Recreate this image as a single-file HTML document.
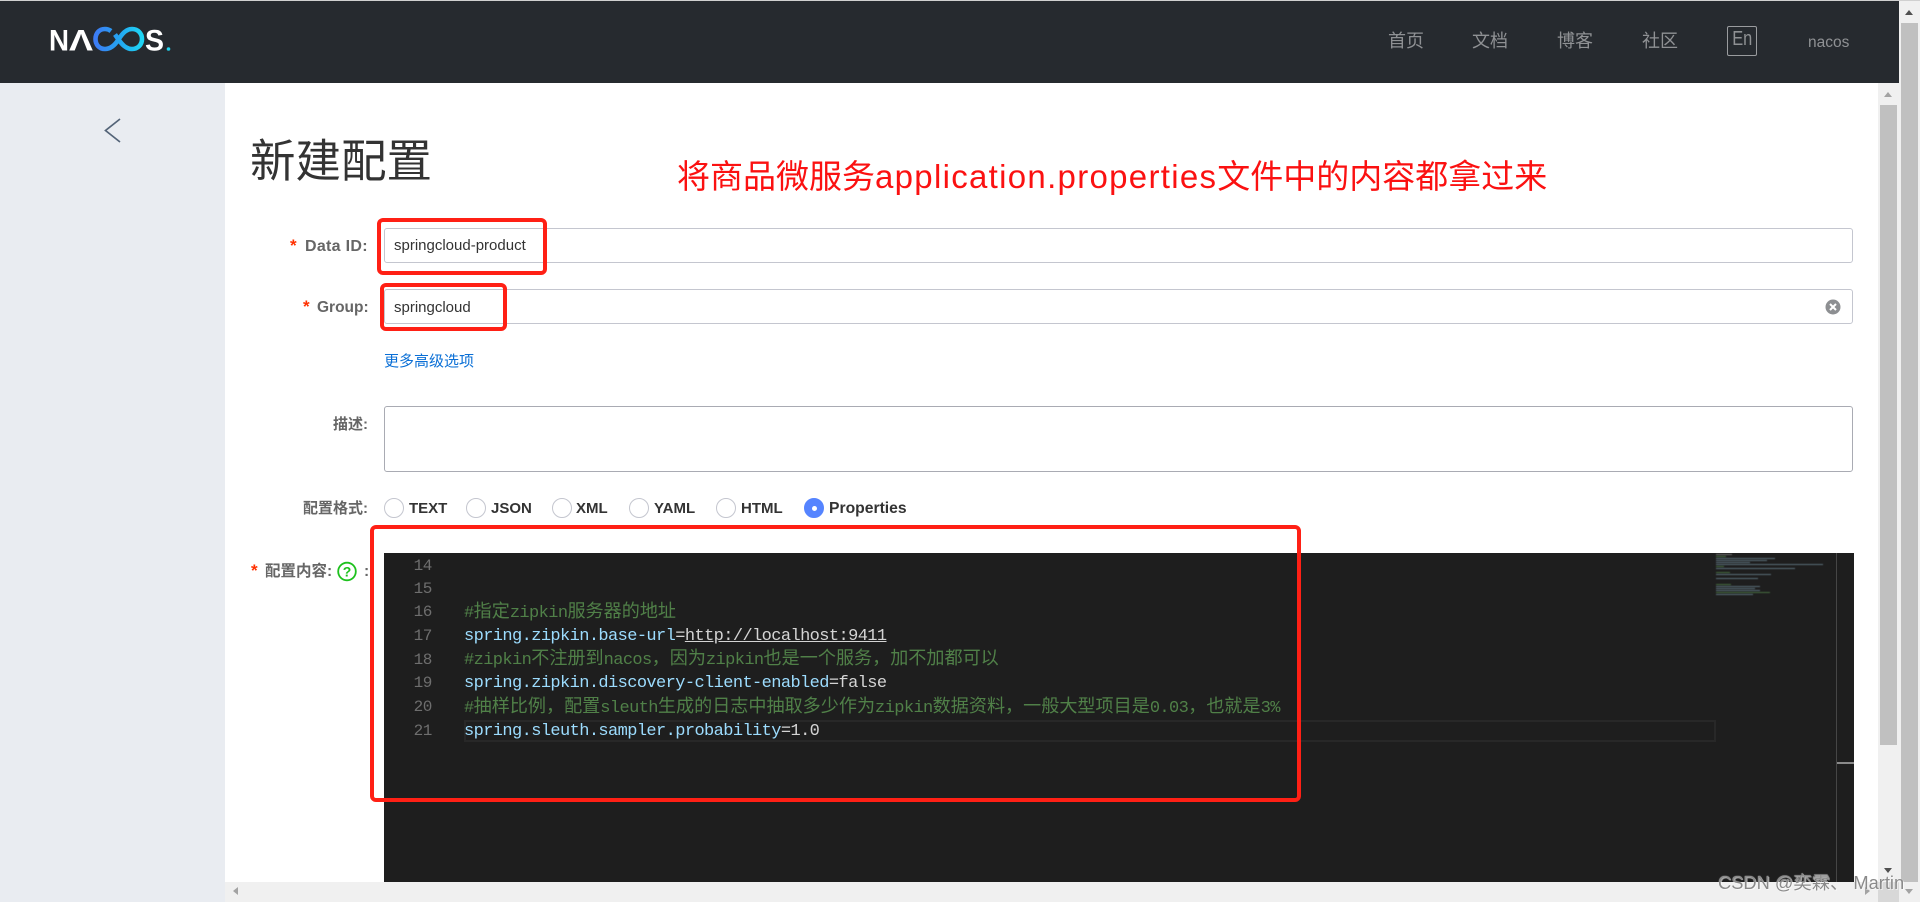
<!DOCTYPE html>
<html lang="zh"><head><meta charset="utf-8"><title>新建配置</title>
<style>
html,body{margin:0;padding:0;width:1920px;height:902px;overflow:hidden;background:#fff}
body{position:relative;font-family:"Liberation Sans","Noto Sans CJK SC",sans-serif}
.a{position:absolute;white-space:nowrap}
.t{position:absolute;white-space:nowrap;line-height:20px;height:20px}
.lb{font-weight:700;font-size:15.500px;color:#666}
.star{color:#ff3000;font-weight:700;font-size:17px}
.inp{position:absolute;box-sizing:border-box;border:1px solid #c4c6cf;border-radius:3px;background:#fff}
.v{font-size:15px;color:#333}
.nav{font-size:18px;color:#8f9194;top:31px}
.r{position:absolute;top:498px;width:20px;height:20px;box-sizing:border-box;border:1px solid #c4c6cf;border-radius:50%;background:#fff}
.rt{top:499px;font-size:15px;font-weight:700;color:#333}
.red{position:absolute;box-sizing:border-box;border:4px solid #ff2015;border-radius:6px}
.ln{position:absolute;left:412px;width:20px;text-align:right;font:16px/24px "Liberation Mono",monospace;letter-spacing:-.4px;color:#6e6e6e;height:24px}
.c{position:absolute;left:464px;white-space:pre;height:24px;font:17px/24px "Liberation Mono","Noto Sans CJK SC",monospace;letter-spacing:-.6px;color:#9cdcfe}
.g{color:#508048}
.g b{font-weight:400;font-size:18.100px;line-height:0;letter-spacing:0;font-family:"Noto Sans CJK SC",sans-serif}
.w{color:#d4d4d4}
.s{position:absolute;width:0;height:0}
.ti{letter-spacing:1.300px}
</style></head><body>
<div class="a" style="left:0;top:0;width:1920px;height:1px;background:#d0d0d0"></div>
<div class="a" style="left:0;top:1px;width:1899px;height:82px;background:#262a2f"></div>

<svg class="a" style="left:40px;top:20px" width="140" height="40" viewBox="0 0 140 40">
<defs><linearGradient id="lg" x1="0" x2="1"><stop offset="0" stop-color="#3d7cf5"/><stop offset=".55" stop-color="#22a8f0"/><stop offset="1" stop-color="#1fd6f5"/></linearGradient></defs>
<text x="9" y="30.500" font-family="Liberation Sans" font-weight="700" font-size="30" fill="#fff" textLength="20" lengthAdjust="spacingAndGlyphs">N</text>
<text x="29" y="30.500" font-family="Liberation Sans" font-weight="700" font-size="30" fill="#fff" textLength="24" lengthAdjust="spacingAndGlyphs">Λ</text>
<path d="M71 11C69 9.500 67 9 65 9C59 9 55.500 13.500 55.500 19C55.500 24.500 59 29 65 29C71 29 75 25 78.500 19.500C82 14 86 9 92 9C98 9 102 13.500 102 19C102 24.500 98 29 92 29C86 29 82 24.500 78.500 19.500L75 14.500" fill="none" stroke="url(#lg)" stroke-width="4.600"/>
<text x="105" y="30.500" font-family="Liberation Sans" font-weight="700" font-size="30" fill="#fff" textLength="19" lengthAdjust="spacingAndGlyphs">S</text>
<circle cx="128.500" cy="29" r="1.800" fill="#22d3ee"/>
</svg>

<div class="t nav" style="left:1388px">首页</div>
<div class="t nav" style="left:1472px">文档</div>
<div class="t nav" style="left:1557px">博客</div>
<div class="t nav" style="left:1642px">社区</div>
<div class="a" style="left:1727px;top:26px;width:30px;height:30px;box-sizing:border-box;border:1px solid #9a9c9f;border-radius:2px;text-align:center;font-size:20px;line-height:25px;color:#8f9194"><span style="display:inline-block;transform:scaleX(.82)">En</span></div>
<div class="t" style="left:1808px;top:33px;font-size:15.500px;color:#8f9194">nacos</div>

<div class="a" style="left:0;top:83px;width:225px;height:819px;background:#e9ecf1"></div>
<svg class="a" style="left:100px;top:115px" width="26" height="32"><path d="M20 4 L5.500 15.500 20 27" fill="none" stroke="#546478" stroke-width="1.700"/></svg>

<div class="a" style="left:250px;top:134px;font-size:45.500px;line-height:56px;color:#333">新建配置</div>
<div class="a" style="left:677px;top:154px;font-size:33px;line-height:46px;color:#fb1111">将商品微服务<span class="ti">application.properties</span>文件中的内容都拿过来</div>

<div class="t star" style="left:290px;top:236px">*</div><div class="t lb" style="left:305px;top:237px;font-size:16px;letter-spacing:.3px">Data ID:</div>
<div class="inp" style="left:384px;top:228px;width:1469px;height:35px"></div>
<div class="t v" style="left:394px;top:236px">springcloud-product</div>

<div class="t star" style="left:303px;top:297px">*</div><div class="t lb" style="left:317px;top:298px">Group:</div>
<div class="inp" style="left:384px;top:289px;width:1469px;height:35px"></div>
<div class="t v" style="left:394px;top:298px">springcloud</div>
<svg class="a" style="left:1825px;top:299px" width="16" height="16"><circle cx="8" cy="8" r="7.500" fill="#8d8f92"/><path d="M5 5L11 11M11 5L5 11" stroke="#fff" stroke-width="2"/></svg>

<div class="t" style="left:384px;top:352px;font-size:15px;color:#0a6fd6">更多高级选项</div>

<div class="t lb" style="left:333px;top:415px;font-size:15px">描述:</div>
<div class="inp" style="left:384px;top:406px;width:1469px;height:66px;border-color:#a9abb3"></div>

<div class="t lb" style="left:303px;top:499px;font-size:15px">配置格式:</div>
<div class="r" style="left:384px"></div><div class="t rt" style="left:409px">TEXT</div>
<div class="r" style="left:466px"></div><div class="t rt" style="left:491px">JSON</div>
<div class="r" style="left:552px"></div><div class="t rt" style="left:576px">XML</div>
<div class="r" style="left:629px"></div><div class="t rt" style="left:654px">YAML</div>
<div class="r" style="left:716px"></div><div class="t rt" style="left:741px">HTML</div>
<div class="r" style="left:804px;background:#5584ff;border-color:#5584ff"></div>
<div class="a" style="left:811.500px;top:505.500px;width:5px;height:5px;border-radius:50%;background:#fff"></div>
<div class="t rt" style="left:829px;font-size:15.700px">Properties</div>

<div class="t star" style="left:251px;top:561px">*</div><div class="t lb" style="left:265px;top:562px;font-size:15.500px">配置内容:</div>
<svg class="a" style="left:337px;top:561px" width="20" height="21"><circle cx="10" cy="10.500" r="8.800" fill="none" stroke="#1dc11d" stroke-width="1.800"/><text x="10" y="15.500" font-family="Liberation Sans" font-size="14" font-weight="700" text-anchor="middle" fill="#1dc11d">?</text></svg>
<div class="t lb" style="left:364px;top:562px">:</div>

<div class="a" style="left:384px;top:553px;width:1470px;height:329px;background:#1e1e1e"></div>
<div class="a" style="left:464px;top:720px;width:1252px;height:22px;box-sizing:border-box;border:2px solid #282828"></div>
<div class="ln" style="top:554px">14</div>
<div class="ln" style="top:577px">15</div>
<div class="ln" style="top:600px">16</div>
<div class="ln" style="top:624px">17</div>
<div class="ln" style="top:648px">18</div>
<div class="ln" style="top:671px">19</div>
<div class="ln" style="top:695px">20</div>
<div class="ln" style="top:719px">21</div>
<div class="c g" style="top:602px">#<b>指定</b>zipkin<b>服务器的地址</b></div>
<div class="c" style="top:625px">spring.zipkin.base-url<span class="w">=<u>http://localhost:9411</u></span></div>
<div class="c g" style="top:649px">#zipkin<b>不注册到</b>nacos<b>，因为</b>zipkin<b>也是一个服务，加不加都可以</b></div>
<div class="c" style="top:672px">spring.zipkin.discovery-client-enabled<span class="w">=false</span></div>
<div class="c g" style="top:697px">#<b>抽样比例，配置</b>sleuth<b>生成的日志中抽取多少作为</b>zipkin<b>数据资料，一般大型项目是</b>0.03<b>，也就是</b>3%</div>
<div class="c" style="top:720px">spring.sleuth.sampler.probability<span class="w">=1.0</span></div>

<svg class="a" style="left:1716px;top:553px;filter:blur(.4px)" width="112" height="44">
<g fill="#6f8a98" opacity=".75">
<rect x="0" y="1" width="16" height="1" fill="#8a8a8a"/>
<rect x="0" y="5" width="59" height="1"/>
<rect x="0" y="7" width="51" height="1"/>
<rect x="0" y="9" width="34" height="1"/>
<rect x="0" y="11" width="107" height="1"/>
<rect x="0" y="15" width="79" height="1"/>
<rect x="0" y="21" width="55" height="1"/>
<rect x="0" y="25" width="42" height="1"/>
<rect x="0" y="33" width="44" height="1"/>
<rect x="0" y="35" width="39" height="1"/>
<rect x="0" y="37" width="44" height="1"/>
<rect x="0" y="41" width="37" height="1"/>
</g>
<g fill="#4f7f48" opacity=".8"><rect x="0" y="3" width="10" height="1"/><rect x="0" y="13" width="8" height="1"/><rect x="0" y="19" width="14" height="1"/><rect x="0" y="31" width="15" height="1"/><rect x="0" y="39" width="54" height="1"/></g>
</svg>
<div class="a" style="left:1836px;top:553px;width:1px;height:329px;background:#464646"></div>
<div class="a" style="left:1837px;top:762px;width:17px;height:2px;background:#8a8a8a"></div>

<!-- inner scrollbars -->
<div class="a" style="left:1878px;top:83px;width:21px;height:799px;background:#f0f0f0"></div>
<div class="a" style="left:1880px;top:105px;width:17px;height:640px;background:#c0c0c0"></div>
<div class="s" style="left:1884px;top:92px;border:4.500px solid transparent;border-top:0;border-bottom:5px solid #a3a3a3"></div>
<div class="s" style="left:1884px;top:868px;border:4.500px solid transparent;border-bottom:0;border-top:5px solid #505050"></div>
<div class="a" style="left:225px;top:882px;width:1653px;height:20px;background:#f0f0f0"></div>
<div class="a" style="left:1878px;top:882px;width:21px;height:20px;background:#d8d8d8"></div>
<div class="s" style="left:233px;top:887px;border:4.500px solid transparent;border-left:0;border-right:5px solid #a3a3a3"></div>
<div class="s" style="left:1865px;top:887px;border:4.500px solid transparent;border-right:0;border-left:5px solid #a3a3a3"></div>

<!-- outer scrollbar -->
<div class="a" style="left:1899px;top:1px;width:21px;height:901px;background:#f0f0f0"></div>
<div class="a" style="left:1901px;top:23px;width:17px;height:859px;background:#c0c0c0"></div>
<div class="s" style="left:1905px;top:10px;border:4.500px solid transparent;border-top:0;border-bottom:5px solid #505050"></div>
<div class="s" style="left:1905px;top:889px;border:4.500px solid transparent;border-bottom:0;border-top:5px solid #a3a3a3"></div>

<!-- red annotations -->
<div class="red" style="left:377px;top:218px;width:170px;height:57px"></div>
<div class="red" style="left:380px;top:283px;width:127px;height:48px"></div>
<div class="red" style="left:370px;top:525px;width:931px;height:277px"></div>

<div class="a" style="left:1718px;top:872px;font-size:18.300px;line-height:22px;color:#8a8a8a;text-shadow:0 0 1px #fff,1px 1px 0 rgba(255,255,255,.5)">CSDN @奕霖、 Martin</div>
</body></html>
